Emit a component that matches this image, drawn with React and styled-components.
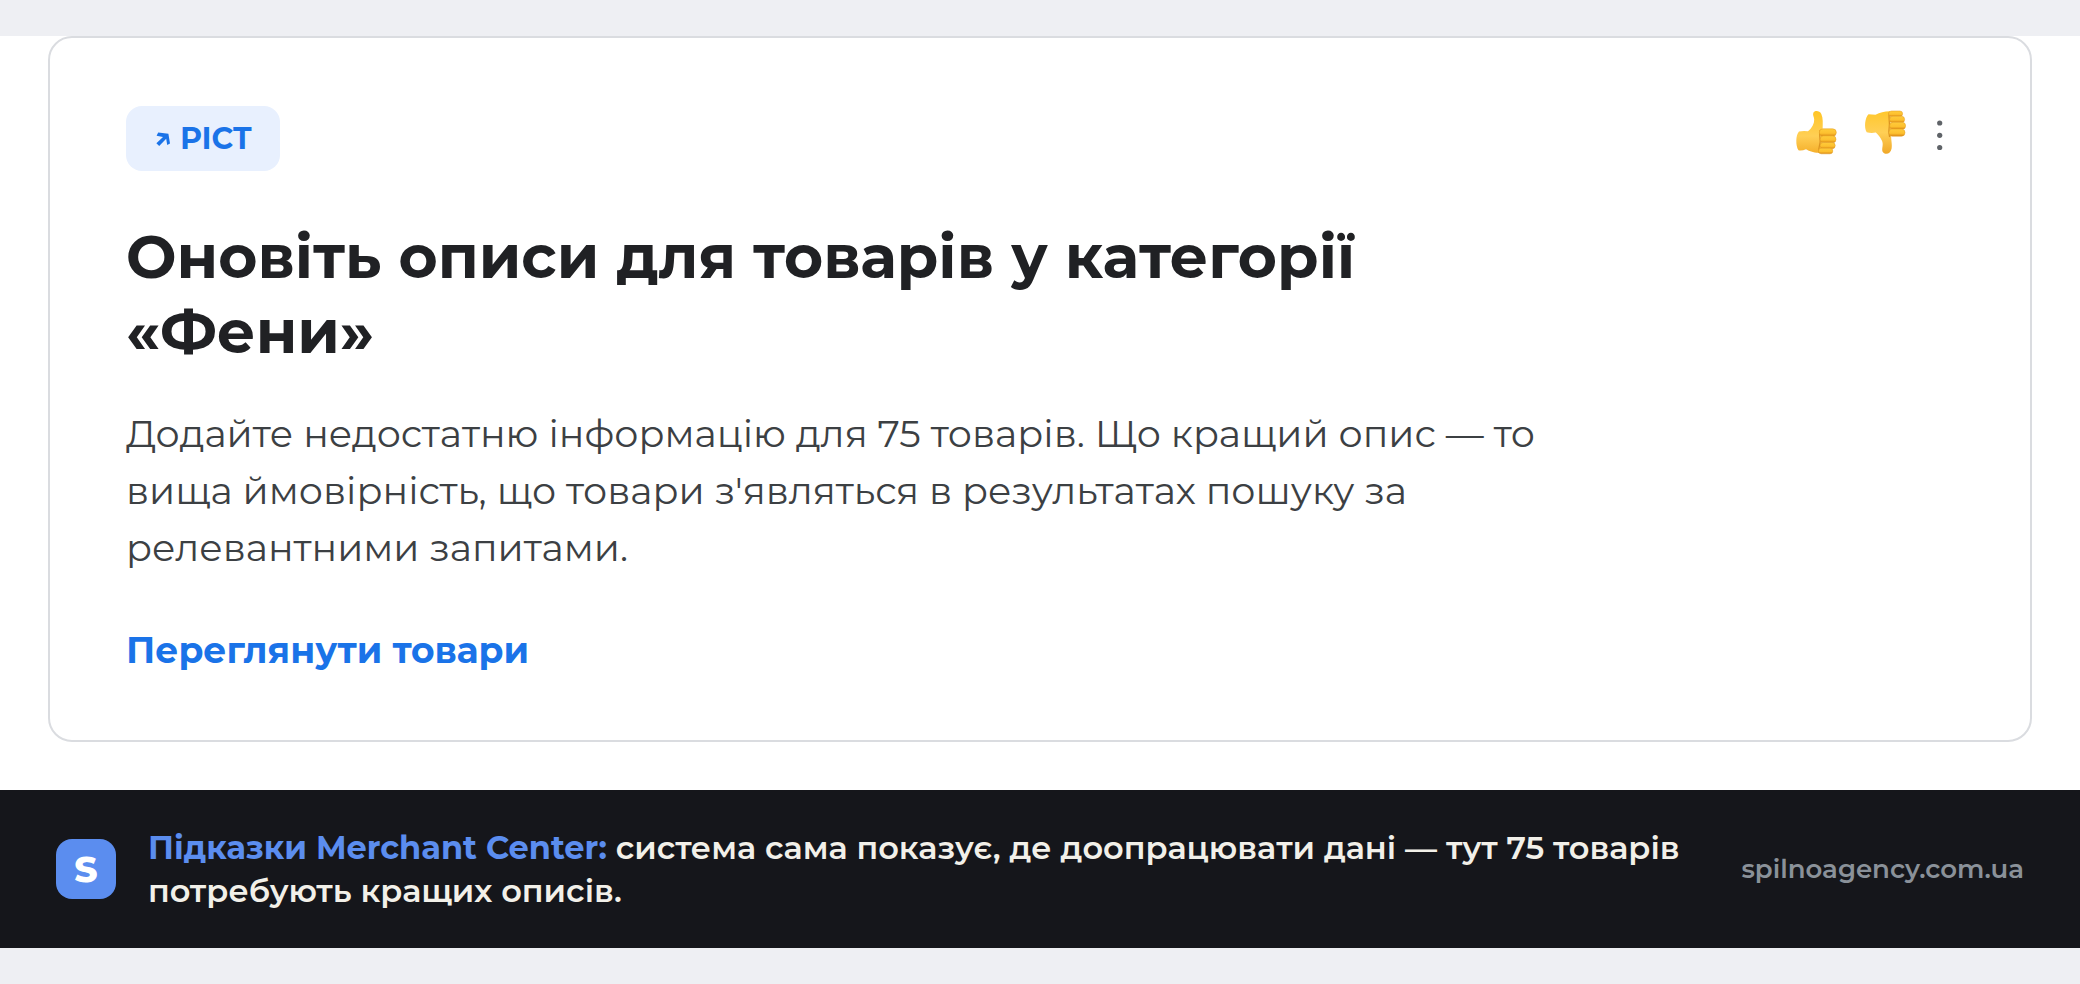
import React from 'react'
import styled, { createGlobalStyle } from 'styled-components'

const GlobalStyle = createGlobalStyle`
  * {
    box-sizing: border-box;
  }

  body {
    margin: 0;
    background-color: #eeeff3;
    font-family: Montserrat, Inter, 'Open Sans', sans-serif;
  }
`

const Page = styled.div`
  padding: 36px 0;
`

const Content = styled.main`
  background-color: #ffffff;
  padding: 0 48px 48px;
`

const Card = styled.article`
  border: 2px solid #dadce0;
  border-radius: 24px;
  background-color: #ffffff;
  padding: 68px 76px;
`

const CardHeader = styled.div`
  display: flex;
  justify-content: space-between;
  align-items: flex-start;
  margin-bottom: 48px;
`

const Badge = styled.span`
  display: flex;
  align-items: center;
  gap: 10px;
  padding: 12px 28px 12px 30px;
  border-radius: 16px;
  background-color: #e8f0fe;
  color: #1a73e8;
  font-size: 30px;
  font-weight: 700;
  line-height: 41px;
`

const Actions = styled.div`
  display: flex;
  gap: 24px;
`

const IconButton = styled.button`
  display: flex;
  padding: 0;
  border: 0;
  background: none;
  cursor: pointer;
`

const Title = styled.h1`
  max-width: 1420px;
  margin: 0 0 36px;
  color: #202124;
  font-size: 60px;
  font-weight: 700;
  line-height: 75px;
`

const Description = styled.p`
  max-width: 1440px;
  margin: 0 0 52px;
  color: #3c4043;
  font-size: 38px;
  line-height: 57px;
`

const CardLink = styled.a`
  display: inline-block;
  color: #1a73e8;
  font-size: 36px;
  font-weight: 700;
  line-height: 44px;
  text-decoration: none;
`

const Footer = styled.footer`
  display: flex;
  align-items: center;
  padding: 36px 56px;
  background-color: #15161b;
`

const Logo = styled.div`
  display: flex;
  flex-shrink: 0;
  align-items: center;
  justify-content: center;
  width: 60px;
  height: 60px;
  margin-right: 32px;
  border-radius: 16px;
  background-color: #5b8def;
  color: #ffffff;
  font-size: 36px;
  font-weight: 800;
`

const Caption = styled.p`
  flex: 1;
  margin: 0 56px 0 0;
  color: #f2f0e9;
  font-size: 32px;
  font-weight: 600;
  line-height: 43px;
`

const Highlight = styled.strong`
  color: #5b8def;
  font-weight: 700;
`

const SiteLink = styled.a`
  color: #8a9199;
  font-size: 26px;
  font-weight: 600;
  text-decoration: none;
`

function ArrowIcon() {
  return (
    <svg width="14" height="14" viewBox="0 0 14 14" fill="#1a73e8">
      <path d="M2.2 0.6 12.4 1.8 14 11.4 11.2 13 10.2 6.8 3.2 14 0.4 11.2 7 5 0.6 3.8Z" />
    </svg>
  )
}

function ThumbUp() {
  return (
    <svg width="44" height="60" viewBox="0 0 44 60">
      <defs>
        <linearGradient id="up-hand" x1="0" y1="0" x2="0" y2="1">
          <stop offset="0" stopColor="#ffc526" />
          <stop offset="0.6" stopColor="#ffcf55" />
          <stop offset="1" stopColor="#f5b02c" />
        </linearGradient>
        <linearGradient id="up-finger" x1="0" y1="0" x2="0" y2="1">
          <stop offset="0" stopColor="#ffcc3a" />
          <stop offset="0.6" stopColor="#fdc02f" />
          <stop offset="1" stopColor="#dc8a14" />
        </linearGradient>
      </defs>
      <path
        fill="url(#up-hand)"
        d="M5 25.5Q9 24.8 14 25.3C18 22 20.3 18 20.2 13.5C20 10.5 18.5 9 19.3 7C20.5 4.3 25.5 4.4 27.3 8C29.2 12 28.8 17.5 28.6 24L28 46.5C21 47.5 15 45 12 43.2Q8 45 4.5 44.3C1.5 40 1.5 29 5 25.5Z"
      />
      <path d="M26 24C24.8 30 26.8 33 26 37.5C25.2 41 24 43.5 25 46.5" fill="none" stroke="#d9901f" strokeWidth="1.2" />
      <g fill="url(#up-finger)" stroke="#e09a22" strokeWidth="0.5">
        <rect x="25.3" y="22.8" width="17" height="7.4" rx="3.7" />
        <rect x="26.2" y="29.8" width="15.8" height="7" rx="3.5" />
        <rect x="26.2" y="36.4" width="15" height="6.4" rx="3.2" />
        <rect x="24.4" y="42.2" width="14.4" height="5.6" rx="2.8" />
      </g>
    </svg>
  )
}

function ThumbDown() {
  return (
    <svg width="44" height="60" viewBox="0 0 44 60">
      <defs>
        <linearGradient id="down-hand" x1="0" y1="0" x2="0" y2="1">
          <stop offset="0" stopColor="#ffc72c" />
          <stop offset="0.5" stopColor="#ffcf55" />
          <stop offset="1" stopColor="#f0a828" />
        </linearGradient>
        <linearGradient id="down-finger" x1="0" y1="0" x2="0" y2="1">
          <stop offset="0" stopColor="#ffcc3a" />
          <stop offset="0.6" stopColor="#fdc02f" />
          <stop offset="1" stopColor="#dc8a14" />
        </linearGradient>
      </defs>
      <path
        fill="url(#down-hand)"
        d="M6.5 8.2Q10 8.6 13.5 8.8C18 6.4 22 5.2 28 5.2L29.3 28C28.7 34 30.5 38 29.6 42.5C28.7 48.6 22.5 49.2 20.5 45.5C19.5 42 22 38.5 19.7 34.2C18 30.8 15.8 28.4 13.8 26.5Q9 27.4 4.7 26.2C1.8 21.5 3 11.5 6.5 8.2Z"
      />
      <path d="M27.2 6.5C26.4 12 28 17 27.2 21C26.4 25 26.8 28 27.6 31" fill="none" stroke="#d9901f" strokeWidth="1.2" />
      <g fill="url(#down-finger)" stroke="#e09a22" strokeWidth="0.5">
        <rect x="26.6" y="5" width="14" height="5.6" rx="2.8" />
        <rect x="27.6" y="10.2" width="15" height="6.4" rx="3.2" />
        <rect x="27.6" y="16.3" width="16" height="7" rx="3.5" />
        <rect x="26.8" y="23" width="16.2" height="7.2" rx="3.6" />
      </g>
    </svg>
  )
}

function MoreIcon() {
  return (
    <svg width="24" height="60" viewBox="0 0 24 60" fill="#5f6368">
      <circle cx="9.7" cy="17" r="2.6" />
      <circle cx="9.7" cy="29.3" r="2.6" />
      <circle cx="9.7" cy="41.5" r="2.6" />
    </svg>
  )
}

function App() {
  return (
    <>
      <GlobalStyle />
      <Page>
        <Content>
          <Card>
            <CardHeader>
              <Badge>
                <ArrowIcon />
                РІСТ
              </Badge>
              <Actions>
                <IconButton type="button" aria-label="Корисно">
                  <ThumbUp />
                </IconButton>
                <IconButton type="button" aria-label="Не корисно">
                  <ThumbDown />
                </IconButton>
                <IconButton type="button" aria-label="Більше дій">
                  <MoreIcon />
                </IconButton>
              </Actions>
            </CardHeader>
            <Title>Оновіть описи для товарів у категорії «Фени»</Title>
            <Description>
              Додайте недостатню інформацію для 75 товарів. Що кращий опис — то вища ймовірність, що
              товари з'являться в результатах пошуку за релевантними запитами.
            </Description>
            <CardLink href="#">Переглянути товари</CardLink>
          </Card>
        </Content>
        <Footer>
          <Logo>S</Logo>
          <Caption>
            <Highlight>Підказки Merchant Center:</Highlight> система сама показує, де доопрацювати
            дані — тут 75 товарів потребують кращих описів.
          </Caption>
          <SiteLink href="#">spilnoagency.com.ua</SiteLink>
        </Footer>
      </Page>
    </>
  )
}

export default App
